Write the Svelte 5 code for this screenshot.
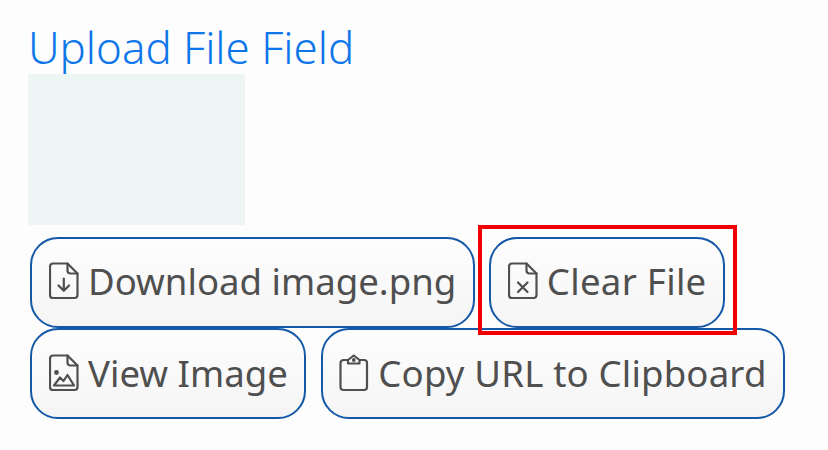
<script>
  const ink = '#4f4f4f';
</script>

<main class="page">
  <h1 class="title">Upload File Field</h1>
  <div class="preview"></div>
  <div class="actions">
    <div class="row first">
      <button class="btn">
        <svg class="icon" viewBox="0 0 30 38" fill="none" stroke={ink} stroke-width="2.2" stroke-linejoin="round" stroke-linecap="round">
          <path d="M4 1.500h14.500L28.500 11.500V33a3 3 0 0 1-3 3H4a3 3 0 0 1-3-3V4.500a3 3 0 0 1 3-3z" />
          <path d="M18.500 1.500V8.500a3 3 0 0 0 3 3h7" />
          <path d="M14.800 16.500v12M9.500 23.500l5.300 5.300 5.300-5.300" />
        </svg>
        <span>Download image.png</span>
      </button>
      <span class="highlight">
        <button class="btn clear">
          <svg class="icon" viewBox="0 0 30 38" fill="none" stroke={ink} stroke-width="2.2" stroke-linejoin="round" stroke-linecap="round">
            <path d="M4 1.500h14.500L28.500 11.500V33a3 3 0 0 1-3 3H4a3 3 0 0 1-3-3V4.500a3 3 0 0 1 3-3z" />
            <path d="M18.500 1.500V8.500a3 3 0 0 0 3 3h7" />
            <path d="M10 20.500l9.500 9.500M19.500 20.500L10 30" />
          </svg>
          <span>Clear File</span>
        </button>
      </span>
    </div>
    <div class="row second">
      <button class="btn">
        <svg class="icon" viewBox="0 0 30 38" fill="none" stroke={ink} stroke-width="2.2" stroke-linejoin="round" stroke-linecap="round">
          <path d="M4 1.500h14.500L28.500 11.500V33a3 3 0 0 1-3 3H4a3 3 0 0 1-3-3V4.500a3 3 0 0 1 3-3z" />
          <path d="M18.500 1.500V8.500a3 3 0 0 0 3 3h7" />
          <circle cx="7.500" cy="18.500" r="1.300" fill={ink} />
          <path d="M5 31.500l6-8 3.500 3.500 4-6 6.500 10.500z" />
        </svg>
        <span>View Image</span>
      </button>
      <button class="btn copy">
        <svg class="icon" viewBox="0 0 30 38" fill="none" stroke={ink} stroke-width="2.2" stroke-linejoin="round" stroke-linecap="round">
          <path d="M9 6H4.500a3 3 0 0 0-3 3V33a3 3 0 0 0 3 3h20.500a3 3 0 0 0 3-3V9a3 3 0 0 0-3-3H20.500" />
          <path d="M9 9.500V6l5.800-4.500L20.500 6v3.500z" />
          <circle cx="14.800" cy="6" r="0.800" fill={ink} />
        </svg>
        <span>Copy URL to Clipboard</span>
      </button>
    </div>
  </div>
</main>

<style>
  :global(body) {
    margin: 0;
    background: #fdfdfd;
  }
  .page {
    width: 828px;
    height: 450px;
    box-sizing: border-box;
    padding: 20px 28px 0;
    font-family: "Noto Sans", sans-serif;
    overflow: hidden;
  }
  .title {
    margin: 0;
    font-size: 43.8px;
    line-height: 54px;
    font-weight: 350;
    color: #0d76ea;
  }
  .preview {
    width: 217px;
    height: 151px;
    background: #eef6f5;
  }
  .actions {
    display: flex;
    flex-direction: column;
    row-gap: 0.5px;
    margin-top: 11.5px;
    padding-left: 2px;
  }
  .row {
    display: flex;
  }
  .first {
    column-gap: 14px;
  }
  .second {
    column-gap: 15px;
  }
  .btn {
    display: flex;
    align-items: center;
    gap: 9px;
    height: 91px;
    box-sizing: border-box;
    padding: 0 16.5px 2px 17px;
    border: 2px solid #1558a8;
    border-radius: 28px;
    background: linear-gradient(#fdfdfd, #f5f5f6);
    font: inherit;
    font-size: 36.6px;
    font-weight: 370;
    color: #4f4f4f;
  }
  .clear {
    letter-spacing: 0.3px;
  }
  .copy {
    padding-left: 16px;
    letter-spacing: 0.17px;
  }
  .icon {
    width: 30px;
    height: 38px;
    flex: none;
  }
  .highlight {
    position: relative;
    display: block;
  }
  .highlight::after {
    content: "";
    position: absolute;
    left: -11px;
    right: -12px;
    top: -11.5px;
    bottom: -7.5px;
    border: 4px solid #f00000;
    pointer-events: none;
  }
</style>
